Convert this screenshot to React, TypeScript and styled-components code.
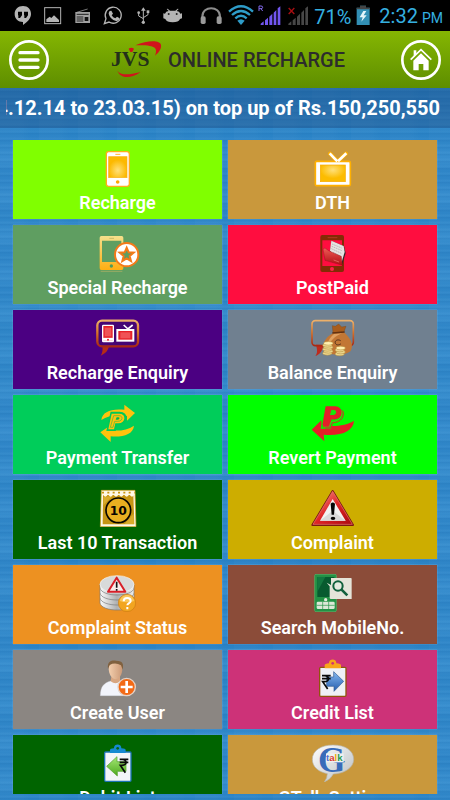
import React, { useId } from 'react';
import styled, { createGlobalStyle } from 'styled-components';

const GlobalStyle = createGlobalStyle`
  * { box-sizing: border-box; }
  body {
    margin: 0;
    font-family: Roboto, "Liberation Sans", sans-serif;
    background: #2d86c9;
  }
`;

const Screen = styled.div`
  display: flex;
  flex-direction: column;
  height: 100vh;
  padding-bottom: 6px;
  overflow: hidden;
  background-color: #2d86c8;
  background-image:
    repeating-linear-gradient(90deg, rgba(255, 255, 255, 0.02) 0 20px, transparent 30px 39px),
    repeating-linear-gradient(180deg, rgba(10, 80, 150, 0.08) 0 1px, transparent 2px 4px, rgba(120, 190, 240, 0.08) 5px 6px, transparent 7px),
    repeating-linear-gradient(180deg, rgba(90, 170, 230, 0.14) 0 6px, rgba(10, 90, 170, 0.06) 14px 24px, rgba(90, 170, 230, 0.14) 39px);
`;

const StatusBar = styled.div`
  display: flex;
  align-items: center;
  justify-content: space-between;
  flex: none;
  height: 31px;
  padding: 0 7px 0 8px;
  background: #000;
  color: #35b0e0;
`;

const StatusGroup = styled.div`
  display: flex;
  align-items: center;
`;

const Glyph = styled.svg<{ $w: number; $h: number }>`
  display: block;
  flex: none;
  width: ${(p) => p.$w}px;
  height: ${(p) => p.$h}px;
`;

const Percent = styled.span`
  width: 44px;
  padding-top: 2px;
  padding-left: 4px;
  font-size: 20px;
  line-height: 30px;
`;

const Clock = styled.time`
  display: flex;
  align-items: baseline;
  gap: 4px;
  padding-top: 2px;
  padding-left: 7px;
  font-size: 20px;
  line-height: 30px;
`;

const Meridiem = styled.span`
  font-size: 14px;
`;

const Header = styled.header`
  display: flex;
  align-items: center;
  justify-content: space-between;
  flex: none;
  height: 57px;
  padding: 0 9px;
  background: linear-gradient(#85b602, #5e8e00);
`;

const RoundButton = styled.button`
  width: 40px;
  height: 40px;
  padding: 0;
  border: 0;
  background: none;
  cursor: pointer;
`;

const Brand = styled.div`
  display: flex;
  align-items: center;
  gap: 6px;
  padding-left: 4px;
`;

const Title = styled.h1`
  margin: 0;
  color: #2c2c2c;
  font-size: 20px;
  font-weight: 500;
  line-height: 28px;
  white-space: nowrap;
`;

const Ticker = styled.div`
  flex: none;
  padding: 0 10px 0 6px;
  background: rgba(20, 60, 110, 0.34);
`;

const TickerText = styled.p`
  display: flex;
  justify-content: flex-end;
  margin: 0;
  overflow: hidden;
  color: #fff;
  font-size: 20px;
  font-weight: 700;
  line-height: 40px;
  white-space: nowrap;
`;

const Menu = styled.nav`
  display: grid;
  grid-template-columns: 1fr 1fr;
  grid-auto-rows: 79px;
  gap: 6px;
  flex: 1;
  min-height: 0;
  margin-top: 12px;
  padding: 0 13px;
  overflow-y: auto;
  scrollbar-width: none;
`;

const Tile = styled.button<{ $color: string }>`
  display: flex;
  flex-direction: column;
  align-items: center;
  padding: 9px 0 0;
  border: 0;
  background: ${(p) => p.$color};
  box-shadow: 0 0 1px rgba(220, 230, 240, 0.6);
  color: #fff;
  font-family: inherit;
  font-size: 18px;
  font-weight: 600;
  line-height: 32px;
  cursor: pointer;
`;

type IconProps = { box: string; children: React.ReactNode };

const TileIcon = ({ box, children }: IconProps) => (
  <Glyph $w={44} $h={38} viewBox={box} aria-hidden="true">
    {children}
  </Glyph>
);

const StatusIcon = ({ x, w = 90, children }: { x: number; w?: number; children: React.ReactNode }) => (
  <Glyph $w={w / 3} $h={31} viewBox={`${x} 0 ${w} 93`} aria-hidden="true">
    {children}
  </Glyph>
);

const Rupee = ({ x, y }: { x: number; y: number }) => (
  <path
    transform={`translate(${x} ${y})`}
    d="M2 3H28M2 12H28M3 3H10C25 3 25 21 9 21H4L19 43"
    fill="none"
    stroke="#0a0a0a"
    strokeWidth="5"
  />
);

const RechargeIcon = () => {
  const id = useId();
  return (
    <TileIcon box="287 57 132 114">
      <radialGradient id={id} cy="65%">
        <stop offset="0" stopColor="#ffe07a" />
        <stop offset="1" stopColor="#fcb900" />
      </radialGradient>
      <rect x="318" y="65" width="69" height="104" rx="7" fill="#fff" stroke="#ffae1a" strokeWidth="4" />
      <rect x="325" y="80" width="55" height="63" fill={`url(#${id})`} stroke="#f7b21c" strokeWidth="2" />
      <path d="M345 73H360" stroke="#ffb52e" strokeWidth="3" />
      <circle cx="352" cy="156" r="5.5" fill="#ffa700" />
    </TileIcon>
  );
};

const TvIcon = () => {
  const id = useId();
  return (
    <TileIcon box="257 57 132 114">
      <radialGradient id={id} cy="30%">
        <stop offset="0" stopColor="#ffe07a" />
        <stop offset="1" stopColor="#fcbc00" />
      </radialGradient>
      <path d="M314 71L334 92M362 71L340 92" stroke="#ffb000" strokeWidth="12" strokeLinecap="round" />
      <rect x="270" y="94" width="105" height="73" rx="4" fill="#fff" stroke="#ffb000" strokeWidth="5" />
      <path d="M313 70L336 94M363 70L338 94" stroke="#fff" strokeWidth="8" />
      <rect x="285" y="105" width="75" height="50" fill={`url(#${id})`} stroke="#f6aa00" strokeWidth="2" />
    </TileIcon>
  );
};

const SpecialIcon = () => {
  const id = useId();
  return (
    <TileIcon box="287 312 132 114">
      <linearGradient id={id} x2="0" y2="1">
        <stop offset="0" stopColor="#f5e08c" />
        <stop offset="1" stopColor="#ffae12" />
      </linearGradient>
      <path fillRule="evenodd" fill={`url(#${id})`} d="M303 318H364Q369 318 369 323V414Q369 420 364 420H303Q298 420 298 414V323Q298 318 303 318ZM305 332V396H363V332Z" />
      <path d="M327 325H341" stroke="#c9bb67" strokeWidth="3" />
      <circle cx="333" cy="408" r="5" fill="#4f9a5c" />
      <path d="M301 424H366" stroke="#b8b267" strokeWidth="2" />
      <circle cx="379" cy="374" r="35" fill="#fff" stroke="#f47a18" strokeWidth="6" />
      <path d="M379 353L385 367L400 368L388 378L392 393L379 385L366 393L370 378L358 368L373 367Z" fill="#5f9d63" stroke="#f47a18" strokeWidth="6" />
    </TileIcon>
  );
};

const PostPaidIcon = () => {
  const id = useId();
  return (
    <TileIcon box="257 312 132 114">
      <linearGradient id={id} x2="0" y2="1">
        <stop offset="0" stopColor="#ef5a55" />
        <stop offset="1" stopColor="#b00d14" />
      </linearGradient>
      <path fillRule="evenodd" fill="#832b05" d="M291 315H350Q356 315 356 321V420Q356 426 350 426H291Q285 426 285 420V321Q285 315 291 315ZM291 331V408H350V331Z" />
      <path d="M307 323H336" stroke="#b43a20" strokeWidth="3" />
      <circle cx="320" cy="417" r="6" fill="#ff214a" />
      <path d="M318 333L356 348L361 369L350 406L315 370Z" fill="#33272a" />
      <path d="M318 332L355 348L358 366L348 400L314 362Z" fill="#e6e2e1" />
      <path d="M320 342L349 354M319 349L350 362M318 356L348 370M323 367L346 379" stroke="#aaa3a5" strokeWidth="2" strokeDasharray="5 2" />
      <path d="M293 357L299 354L310 362L348 379L351 406L299 391Z" fill={`url(#${id})`} stroke="#861016" />
      <path d="M325 390L341 396" stroke="#ed7f77" strokeWidth="2" />
    </TileIcon>
  );
};

const BubbleGradient = ({ id }: { id: string }) => (
  <linearGradient id={id} x2="0" y2="1">
    <stop offset="0" stopColor="#ecb06a" />
    <stop offset=".45" stopColor="#d9762a" />
    <stop offset="1" stopColor="#a82714" />
  </linearGradient>
);

const RechargeEnquiryIcon = () => {
  const id = useId();
  return (
    <TileIcon box="287 42 132 114">
      <BubbleGradient id={id} />
      <path d="M306 122C308 134 306 144 301 152C316 145 324 136 326 122Z" fill="#b52c16" />
      <rect x="291" y="47" width="122" height="77" rx="14" fill="#450574" stroke={`url(#${id})`} strokeWidth="7" />
      <rect x="307" y="61" width="32" height="49" rx="2" fill="#e62228" stroke="#fff" strokeWidth="4" />
      <path d="M307 103H339" stroke="#fff" strokeWidth="9" />
      <circle cx="323" cy="104" r="3" fill="#e62228" />
      <path d="M370 60L383 72L397 60" fill="none" stroke="#fff" strokeWidth="5" />
      <rect x="351" y="75" width="48" height="32" fill="#e62228" stroke="#fff" strokeWidth="6" />
      <rect x="313" y="68" width="20" height="26" fill="#f05356" />
      <rect x="360" y="82" width="30" height="18" fill="#f05356" />
    </TileIcon>
  );
};

const Coins = ({ x, y, n }: { x: number; y: number; n: number }) => (
  <g stroke="#b08a37" strokeWidth="1.5">
    {Array.from({ length: n }, (_, i) => (
      <ellipse key={i} cx={x + (i % 2) * 3} cy={y - i * 6} rx="14" ry="5.5" fill={i === n - 1 ? '#fff0b0' : '#ecd68d'} />
    ))}
  </g>
);

const BalanceIcon = () => {
  const id = useId();
  return (
    <TileIcon box="257 42 132 114">
      <BubbleGradient id={id} />
      <path d="M272 119C276 134 277 144 270 153C283 149 292 138 294 120Z" fill="#bd2b1d" />
      <rect x="260" y="47" width="124" height="75" rx="10" fill="none" stroke={`url(#${id})`} strokeWidth="5" />
      <path d="M321 62L330 64L340 57L349 66L362 64L356 80L323 84Z" fill="#a95d1c" stroke="#75400f" />
      <path d="M324 84L354 80C373 96 386 115 377 136C370 153 301 153 297 136C287 112 307 92 324 84Z" fill="#c27735" />
      <path d="M326 87C313 98 304 112 309 128C314 107 328 94 350 85Z" fill="#dfa160" />
      <path d="M321 84L358 81" stroke="#643210" strokeWidth="4" />
      <path d="M346 107C336 101 327 108 330 115C334 123 344 119 347 116" fill="none" stroke="#53301b" strokeWidth="3" />
      <Coins x={306} y={145} n={6} />
      <Coins x={343} y={147} n={4} />
    </TileIcon>
  );
};

const TransferIcon = () => (
  <TileIcon box="287 297 132 114">
    <path d="M303 345C306 320 332 310 372 314V299L404 324L380 347V333C346 328 323 332 303 345Z" fill="#ffc20d" />
    <path d="M401 362C398 389 367 397 331 394V411L300 382L331 361V376C360 379 382 374 401 362Z" fill="#ffc20d" />
    <path d="M334 324H358C382 324 380 356 354 357H347L343 374H323Z" fill="#ffc20d" stroke="#00c957" strokeWidth="8" />
    <path d="M334 326H358C378 326 377 354 354 355H345L341 373H324Z" fill="#ffc20d" />
    <path d="M340 332H356C369 332 368 349 352 349H343L338 367H330Z" fill="none" stroke="#3dbd44" strokeWidth="2" />
    <path d="M349 337L346 344H353C359 343 359 337 354 337Z" fill="#00b84f" />
  </TileIcon>
);

const RevertIcon = () => (
  <TileIcon box="257 297 132 114">
    <path d="M259 374L288 346L290 361C330 366 365 361 386 347C384 378 349 394 295 389L297 409Z" fill="#e32028" />
    <path d="M300 304H331C361 304 359 344 328 346H320L315 369H289Z" fill="#e32028" stroke="#00f800" strokeWidth="5" />
    <path d="M301 304H329C354 304 351 339 325 341H314L309 360H291Z" fill="#e32028" />
    <path d="M318 315L314 330H324C335 329 335 315 326 315Z" fill="#17e80a" />
    <path d="M349 318C352 334 343 346 326 349L317 350L311 366H294" fill="none" stroke="#5fbf16" strokeWidth="2" />
    <path d="M352 317C359 336 345 350 328 353H322L316 369H300" fill="none" stroke="#e32028" strokeWidth="3" />
  </TileIcon>
);

const LastTenIcon = () => (
  <TileIcon box="287 42 132 114">
    <path d="M303 46H404L407 155H300Z" fill="#fff8e6" stroke="#d79f1b" strokeWidth="2" />
    <path d="M308 60H399L402 148H307Z" fill="#c69514" />
    <path d="M309 66L337 63L309 91ZM400 116L373 147H401Z" fill="#d9ab2b" />
    <path d="M305 53H403" stroke="#c99512" strokeWidth="5" strokeDasharray="6 10" />
    <path d="M307 58Q315 72 323 58Q331 72 339 58Q347 72 355 58Q363 72 371 58Q379 72 387 58Q395 72 403 58" fill="#fff8e6" />
    <circle cx="354" cy="106" r="37" fill="#e9af20" stroke="#080500" strokeWidth="5" />
    <text x="354" y="119" textAnchor="middle" fontFamily="DejaVu Sans" fontSize="37" fontWeight="700" fill="#080500">10</text>
  </TileIcon>
);

const ComplaintIcon = () => {
  const id = useId();
  return (
    <TileIcon box="257 42 132 114">
      <linearGradient id={id} x2="1" y2="1">
        <stop offset="0" stopColor="#fa9b91" />
        <stop offset=".5" stopColor="#df2426" />
        <stop offset="1" stopColor="#a90911" />
      </linearGradient>
      <path d="M322 48L383 150H261Z" fill={`url(#${id})`} stroke="#7d1712" strokeWidth="6" strokeLinejoin="round" />
      <path d="M322 49L381 148H263Z" fill={`url(#${id})`} stroke="#f07970" strokeWidth="2" />
      <path d="M322 72L361 137H284Z" fill="#f2f2f2" />
      <path d="M322 107L361 137H284Z" fill="#dadada" />
      <path d="M316 86Q322 79 329 86L326 119H319Z" fill="#050505" />
      <ellipse cx="323" cy="130" rx="7" ry="5" fill="#050505" />
    </TileIcon>
  );
};

const ComplaintStatusIcon = () => {
  const id = useId();
  return (
    <TileIcon box="287 297 132 114">
      <linearGradient id={id}>
        <stop offset="0" stopColor="#fafafa" />
        <stop offset=".5" stopColor="#aeb0b1" />
        <stop offset="1" stopColor="#eeeeee" />
      </linearGradient>
      {[376, 361, 346, 331].map((y) => (
        <path key={y} d={`M299 ${y - 5}V${y + 8}C304 ${y + 36} 397 ${y + 36} 401 ${y + 8}V${y - 5}Z`} fill={`url(#${id})`} stroke="#77797a" strokeWidth="2" />
      ))}
      <ellipse cx="350" cy="328" rx="51" ry="26" fill="#d8dada" stroke="#f8f8f8" strokeWidth="2" />
      <path d="M349 308L375 350H323Z" fill="#f7eceb" stroke="#d81f29" strokeWidth="6" strokeLinejoin="round" />
      <path d="M349 320V338M349 342V347" stroke="#111" strokeWidth="5" />
      <circle cx="380" cy="384" r="26" fill="#f2a520" stroke="#cb7a10" strokeWidth="2" />
      <path d="M358 378C364 354 396 354 402 378Q380 386 358 378Z" fill="#f9c75d" />
      <path d="M370 379C370 365 391 366 391 378C391 385 381 384 381 391M381 396V403" fill="none" stroke="#fff" strokeWidth="6" />
    </TileIcon>
  );
};

const SearchMobileIcon = () => (
  <TileIcon box="257 297 132 114">
    <rect x="268" y="298" width="65" height="112" rx="4" fill="#239245" stroke="#56b66b" strokeWidth="2" />
    <path d="M276 306H327V366H276Z" fill="#075b2f" />
    <path d="M276 306H300L276 350Z" fill="#147840" />
    <path d="M304 323L317 330V309H377Q379 309 379 312V372H317Q313 372 313 368V334Z" fill="#e5e4d9" />
    <circle cx="338" cy="333" r="14" fill="#e6eadf" stroke="#12603c" strokeWidth="6" />
    <path d="M348 343L366 361" stroke="#12603c" strokeWidth="8" />
    <circle cx="301" cy="374" r="5" fill="#e2eadc" />
    <rect x="274" y="380" width="54" height="22" rx="4" fill="#dce7d7" />
    <path d="M274 391H328M292 380V402M310 380V402" stroke="#239245" strokeWidth="2" />
  </TileIcon>
);

const CreateUserIcon = () => {
  const id = useId();
  return (
    <TileIcon box="287 42 132 114">
      <linearGradient id={id}>
        <stop offset="0" stopColor="#f3cfae" />
        <stop offset="1" stopColor="#cc9a77" />
      </linearGradient>
      <path d="M300 152C300 124 312 113 331 108L361 108C377 113 383 125 383 152Z" fill="#f2f4fb" stroke="#ced2df" />
      <path d="M333 94H359V108Q347 121 331 109Z" fill="#d8a681" />
      <path d="M325 68C325 48 366 44 366 70C366 88 358 101 347 103C333 101 325 87 325 68Z" fill={`url(#${id})`} />
      <path d="M323 72C319 44 340 46 347 47C370 47 370 60 367 74L362 61Q345 51 328 60Z" fill="#80613f" />
      <circle cx="379" cy="126" r="26" fill="#f36a16" stroke="#e3d4ca" strokeWidth="4" />
      <path d="M379 108V144M361 126H397" stroke="#fff" strokeWidth="8" />
    </TileIcon>
  );
};

const CreditIcon = () => {
  const id = useId();
  return (
    <TileIcon box="257 42 132 114">
      <linearGradient id={id} x2="0" y2="1">
        <stop offset="0" stopColor="#86b9f0" />
        <stop offset="1" stopColor="#245cae" />
      </linearGradient>
      <rect x="283" y="67" width="79" height="87" rx="3" fill="#eff1f6" stroke="#90550b" strokeWidth="4" />
      <path d="M298 70V61Q298 56 311 55C310 40 334 40 333 55Q347 56 347 61V70Z" fill="#f8a51b" />
      <circle cx="322" cy="55" r="4" fill="#cf3178" />
      <path d="M304 96H325V80L355 109L326 139V124H304Z" fill={`url(#${id})`} stroke="#325b91" strokeWidth="2" />
      <Rupee x={288} y={89} />
    </TileIcon>
  );
};

const DebitIcon = () => {
  const id = useId();
  return (
    <TileIcon box="287 297 132 114">
      <linearGradient id={id} x2="0" y2="1">
        <stop offset="0" stopColor="#a5e875" />
        <stop offset="1" stopColor="#4ea91e" />
      </linearGradient>
      <rect x="313" y="321" width="79" height="88" rx="3" fill="#f3f5f8" stroke="#1b74b4" strokeWidth="4" />
      <path d="M329 324V315Q329 311 341 310C340 295 364 295 363 310Q376 311 376 315V324Z" fill="#1689d1" />
      <circle cx="352" cy="310" r="4" fill="#07660b" />
      <path d="M319 364L350 335V350H377V379H351V393Z" fill={`url(#${id})`} stroke="#4e9d27" strokeWidth="2" />
      <Rupee x={356} y={340} />
    </TileIcon>
  );
};

const TalkIcon = () => {
  const id = useId();
  return (
    <TileIcon box="257 297 132 114">
      <linearGradient id={id} x2="1" y2="1">
        <stop offset="0" stopColor="#fff" />
        <stop offset="1" stopColor="#b9bec1" />
      </linearGradient>
      <path d="M323 300C362 300 385 318 385 343C385 369 356 386 324 387Q315 404 297 411Q306 399 306 386C280 381 261 366 261 343C261 317 287 300 323 300Z" fill={`url(#${id})`} stroke="#b7b4a8" strokeWidth="2" />
      <text x="278" y="380" fontFamily="Liberation Serif" fontSize="106" fill="#386bb9">G</text>
      <path d="M302 325H355V352H302Z" fill="#eef0f1" />
      <text x="302" y="349" fontFamily="Liberation Sans" fontSize="29">
        <tspan fill="#526fd0">t</tspan>
        <tspan fill="#dc3b34">a</tspan>
        <tspan fill="#e9ae0b">l</tspan>
        <tspan fill="#2a9c50">k</tspan>
      </text>
    </TileIcon>
  );
};

const tiles = [
  { label: 'Recharge', color: '#80ff00', Icon: RechargeIcon },
  { label: 'DTH', color: '#c9983c', Icon: TvIcon },
  { label: 'Special Recharge', color: '#5f9e61', Icon: SpecialIcon },
  { label: 'PostPaid', color: '#ff0d3f', Icon: PostPaidIcon },
  { label: 'Recharge Enquiry', color: '#4b0082', Icon: RechargeEnquiryIcon },
  { label: 'Balance Enquiry', color: '#708090', Icon: BalanceIcon },
  { label: 'Payment Transfer', color: '#00cd5a', Icon: TransferIcon },
  { label: 'Revert Payment', color: '#00ff00', Icon: RevertIcon },
  { label: 'Last 10 Transaction', color: '#006400', Icon: LastTenIcon },
  { label: 'Complaint', color: '#cdad00', Icon: ComplaintIcon },
  { label: 'Complaint Status', color: '#ed9121', Icon: ComplaintStatusIcon },
  { label: 'Search MobileNo.', color: '#8b4c39', Icon: SearchMobileIcon },
  { label: 'Create User', color: '#8b8682', Icon: CreateUserIcon },
  { label: 'Credit List', color: '#cd3278', Icon: CreditIcon },
  { label: 'Debit List', color: '#006400', Icon: DebitIcon },
  { label: 'GTalk Setting', color: '#c9983c', Icon: TalkIcon },
];

const Notifications = () => (
  <StatusGroup>
    <StatusIcon x={24}>
      <path d="M69 18C84 18 93 28 93 42C93 55 83 66 69 75V66C54 66 44 56 44 42C44 28 54 18 69 18Z" fill="#b4b4b4" />
      <path d="M54 35H66V46L60 54H55V46H54ZM72 35H84V46L78 54H73V46H72Z" fill="#000" />
    </StatusIcon>
    <StatusIcon x={114}>
      <rect x="134" y="23" width="48" height="48" fill="none" stroke="#b4b4b4" strokeWidth="3" />
      <path d="M139 66V58L149 50L154 54L162 46L177 60V66Z" fill="#b4b4b4" />
    </StatusIcon>
    <StatusIcon x={204}>
      <path d="M230 37L263 27" stroke="#777" strokeWidth="3" />
      <path d="M226 36H270V69H226Z" fill="#a2a2a2" />
      <path d="M230 43H266M230 51H250M230 57H250M230 63H250" stroke="#222" strokeWidth="3" />
      <rect x="254" y="51" width="11" height="12" fill="#111" />
    </StatusIcon>
    <StatusIcon x={294}>
      <path d="M313 71L318 56A24 24 0 1 1 327 66Z" fill="none" stroke="#b4b4b4" strokeWidth="4" />
      <path d="M329 33L334 32L339 41L335 46Q339 53 346 55L351 50L359 55Q357 65 348 63Q330 58 326 41Q326 36 329 33Z" fill="#b4b4b4" />
    </StatusIcon>
    <StatusIcon x={384}>
      <path d="M430 26V67M430 56L416 48V39M430 53L444 44V35" fill="none" stroke="#b4b4b4" strokeWidth="3" />
      <path d="M423 32L430 22L437 32Z" fill="#b4b4b4" />
      <circle cx="416" cy="38" r="4" fill="#b4b4b4" />
      <rect x="440" y="31" width="8" height="8" fill="#b4b4b4" />
      <circle cx="430" cy="67" r="5" fill="#b4b4b4" />
    </StatusIcon>
    <StatusIcon x={474}>
      <path d="M495 41Q497 34 506 33L500 27L503 26L510 32H526L533 26L536 27L530 33Q539 34 541 41L546 40V55L540 57Q536 67 518 67Q500 67 496 57L490 55V40Z" fill="#b4b4b4" />
      <circle cx="506" cy="42" r="3" fill="#222" />
      <circle cx="530" cy="42" r="3" fill="#222" />
    </StatusIcon>
  </StatusGroup>
);

const bars = (x: number, fill: string) => (
  <path
    fill={fill}
    d={`M${x} 75V71L${x + 9} 64V75ZM${x + 13} 75V61L${x + 22} 53V75ZM${x + 26} 75V50L${x + 35} 41V75ZM${x + 39} 75V38L${x + 47} 30V75ZM${x + 51} 75V25L${x + 59} 19V75Z`}
  />
);

const SystemStatus = () => (
  <StatusGroup>
    <StatusIcon x={603} w={81}>
      <path d="M613 58V50C613 16 666 16 666 50V58" fill="none" stroke="#8c8c8c" strokeWidth="6" />
      <rect x="608" y="49" width="15" height="23" rx="5" fill="#9a9a9a" />
      <rect x="656" y="49" width="15" height="23" rx="5" fill="#9a9a9a" />
    </StatusIcon>
    <StatusIcon x={9} w={87}>
      <path d="M54 75L43 62Q54 53 65 62Z" fill="#2e9cc8" />
      <path d="M37 55Q54 40 71 55M27 45Q54 21 81 45M18 35Q54 3 90 35" fill="none" stroke="#2e9cc8" strokeWidth="7" />
    </StatusIcon>
    <StatusIcon x={96} w={87}>
      <path d="M108 33V18H114Q119 18 119 22Q119 26 114 26H108M114 26L119 33" fill="none" stroke="#8068e8" strokeWidth="3" />
      {bars(113, '#7256f0')}
    </StatusIcon>
    <StatusIcon x={183} w={78}>
      <path d="M197 24L214 42M214 24L197 42" stroke="#a80e12" strokeWidth="4" />
      {bars(196, '#474747')}
    </StatusIcon>
    <Percent>71%</Percent>
    <StatusIcon x={393} w={54}>
      <path d="M401 23H411V17H429V23H440V75H401Z" fill="#328fb4" />
      <path d="M401 23H411V17H429V23H440V28H401Z" fill="#454545" />
      <path d="M421 33L410 52H419L415 65L431 46H422L430 33Z" fill="#e4f5fa" />
    </StatusIcon>
    <Clock>
      2:32 <Meridiem>PM</Meridiem>
    </Clock>
  </StatusGroup>
);

const Logo = () => (
  <Glyph $w={53} $h={40} viewBox="330 119 159 120" role="img" aria-label="JVS">
    <path d="M409 135C447 119 483 119 486 134C488 146 478 158 468 166C477 143 471 133 409 135Z" fill="#d0141b" />
    <path d="M355 211C365 225 386 225 425 215C397 235 365 236 355 211Z" fill="#d0141b" />
    <path d="M389 145Q397 139 405 145L400 155H394Z" fill="#d0141b" />
    <text x="336" y="196" fontFamily="Liberation Serif" fontSize="65" fontWeight="700" fill="#23301a">JVS</text>
  </Glyph>
);

export default function App() {
  return (
    <Screen>
      <GlobalStyle />
      <StatusBar>
        <Notifications />
        <SystemStatus />
      </StatusBar>
      <Header>
        <RoundButton aria-label="Menu">
          <Glyph $w={40} $h={40} viewBox="0 0 120 120" aria-hidden="true">
            <circle cx="60" cy="60" r="56" fill="none" stroke="#fff" strokeWidth="8" />
            <path d="M33 38H87M33 60H87M33 82H87" stroke="#fff" strokeWidth="10" strokeLinecap="round" />
          </Glyph>
        </RoundButton>
        <Brand>
          <Logo />
          <Title>ONLINE RECHARGE</Title>
        </Brand>
        <RoundButton aria-label="Home">
          <Glyph $w={40} $h={40} viewBox="0 0 120 120" aria-hidden="true">
            <circle cx="60" cy="60" r="56" fill="none" stroke="#fff" strokeWidth="8" />
            <path d="M29 59L60 29L91 59" fill="none" stroke="#fff" strokeWidth="5" />
            <path d="M37 62L60 40L83 62V91H67V72H53V91H37Z" fill="#fff" />
            <path d="M38 48V31H46V41" fill="#fff" />
          </Glyph>
        </RoundButton>
      </Header>
      <Ticker>
        <TickerText>4.12.14 to 23.03.15) on top up of Rs.150,250,550</TickerText>
      </Ticker>
      <Menu>
        {tiles.map(({ label, color, Icon }) => (
          <Tile key={label} $color={color}>
            <Icon />
            {label}
          </Tile>
        ))}
      </Menu>
    </Screen>
  );
}
